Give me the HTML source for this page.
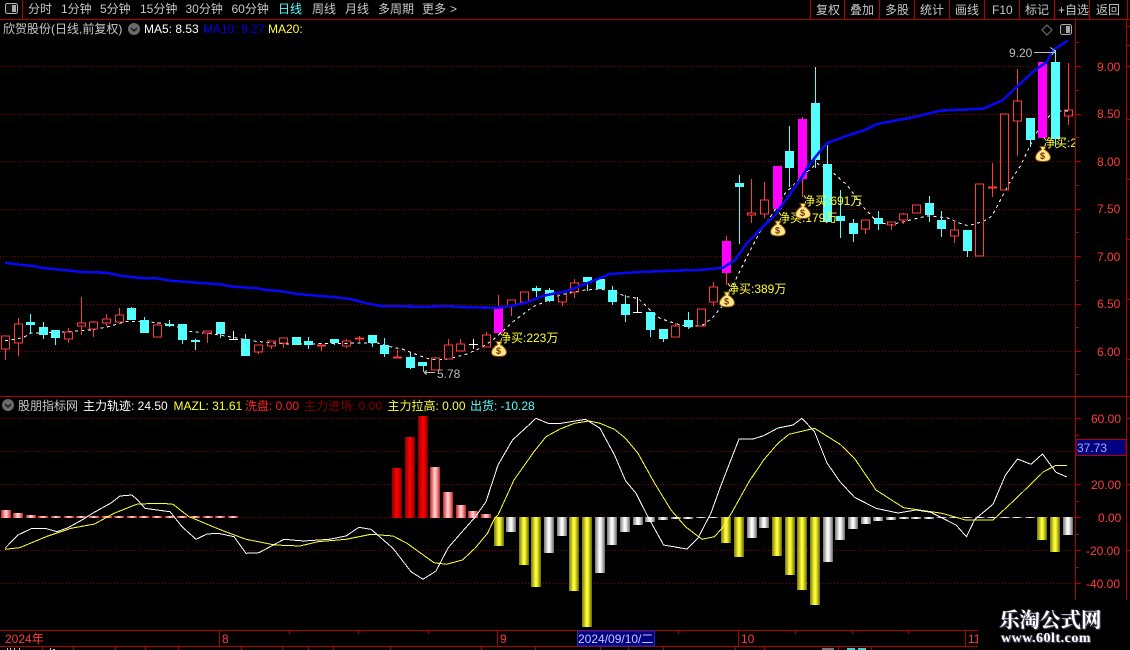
<!DOCTYPE html>
<html><head><meta charset="utf-8"><style>
html,body{margin:0;padding:0;background:#000;width:1130px;height:650px;overflow:hidden}
svg{position:absolute;left:0;top:0}
text{font-family:"Liberation Sans","Noto Sans CJK SC",sans-serif;font-size:12px;white-space:pre}
.t{fill:#c8c8c8}.p{fill:#ff3c3c}.y{fill:#ffff30}
.wm{position:absolute;color:#fff;white-space:nowrap;text-shadow:1px 1px 1px #557,-1px 0 1px #334}
</style></head><body>
<svg width="1130" height="650" viewBox="0 0 1130 650" xmlns="http://www.w3.org/2000/svg">
<defs>
<linearGradient id="gy"><stop offset="0" stop-color="#777700"/><stop offset=".45" stop-color="#ffff40"/><stop offset=".6" stop-color="#f4f430"/><stop offset="1" stop-color="#666600"/></linearGradient>
<linearGradient id="gw"><stop offset="0" stop-color="#777"/><stop offset=".45" stop-color="#fff"/><stop offset=".6" stop-color="#f0f0f0"/><stop offset="1" stop-color="#666"/></linearGradient>
<linearGradient id="gr"><stop offset="0" stop-color="#8a0000"/><stop offset=".45" stop-color="#ff0000"/><stop offset=".6" stop-color="#f00000"/><stop offset="1" stop-color="#7a0000"/></linearGradient>
<linearGradient id="gp"><stop offset="0" stop-color="#c82020"/><stop offset=".45" stop-color="#ffd0d0"/><stop offset=".6" stop-color="#ffb8b8"/><stop offset="1" stop-color="#c02020"/></linearGradient>
<clipPath id="cp"><rect x="0" y="20" width="1075" height="376"/></clipPath>
</defs>
<rect width="1130" height="650" fill="#000"/>

<!-- frame lines -->
<g stroke="#b00000" stroke-width="1" shape-rendering="crispEdges" fill="none">
<path d="M0 19.5H1130M22.5 0V19M810.5 0V19M844.5 0V19M879.5 0V19M914.5 0V19M949.5 0V19M984.5 0V19M1019.5 0V19M1054.5 0V19M1089.5 0V19M1127.5 0V19"/>
<path d="M0 396.5H1130M1075.5 20V600M1126.5 20V600"/>
<path d="M1075 66.5h6M1075 114.5h6M1075 161.5h6M1075 209.5h6M1075 256.5h6M1075 304.5h6M1075 351.5h6M1075 90.5h4M1075 137.5h4M1075 185.5h4M1075 232.5h4M1075 280.5h4M1075 327.5h4M1075 374.5h4M1075 42.5h4"/>
<path d="M1126 26.5h4M1126 45.5h4M1126 66.5h4M1126 119.5h4M1126 179.5h4M1126 239.5h4M1126 299.5h4M1126 359.5h4"/>
<path d="M1075 418.5h6M1075 484.5h6M1075 517.5h6M1075 550.5h6M1075 583.5h6M1075 435.5h4M1075 501.5h4M1075 534.5h4M1075 567.5h4M1126 418.5h4M1126 484.5h4M1126 550.5h4"/>
<path d="M0 630.5H978M0 646.5H978M219.5 631V646M497.5 631V646M738.5 631V646M965.5 631V646"/>
<path d="M289.5 631v3M358.5 631v3M428.5 631v3M678.5 631v3M795.5 631v3M852.5 631v3M908.5 631v3M42.5 646v4M73.5 646v4M115.5 646v4M145.5 646v4M178.5 646v4M241.5 646v4M282.5 646v4M308.5 646v4M333.5 646v4M390.5 646v4M481.5 646v4M535.5 646v4M600.5 646v4M628.5 646v4M663.5 646v4M735.5 646v4M764.5 646v4M838.5 646v4M871.5 646v4"/>
</g>
<g stroke="#8c0000" stroke-dasharray="1 2" shape-rendering="crispEdges">
<path d="M0 66.5H1075M0 114.5H1075M0 161.5H1075M0 209.5H1075M0 256.5H1075M0 304.5H1075M0 351.5H1075M0 418.5H1075M0 451.5H1075M0 484.5H1075M0 517.5H1075M0 550.5H1075M0 583.5H1075"/>
</g>

<!-- top bar -->
<rect x="5.5" y="3.5" width="12" height="10" rx="2" fill="#111" stroke="#b4b4b4"/><rect x="12" y="5" width="4" height="7" fill="#a8a8a8"/>
<g class="t" text-anchor="start">
<text x="28" y="13">分时</text><text x="61" y="13">1分钟</text><text x="100" y="13">5分钟</text><text x="140" y="13">15分钟</text><text x="185.500" y="13">30分钟</text><text x="231.500" y="13">60分钟</text>
<text x="278" y="13" style="fill:#54ffff">日线</text>
<text x="312" y="13">周线</text><text x="345" y="13">月线</text><text x="378" y="13">多周期</text><text x="422" y="13">更多</text><text x="450" y="13">&gt;</text>
<text x="816" y="14">复权</text><text x="850" y="14">叠加</text><text x="885" y="14">多股</text><text x="920" y="14">统计</text><text x="955" y="14">画线</text><text x="992" y="14">F10</text><text x="1025" y="14">标记</text><text x="1058" y="14">+自选</text><text x="1096" y="14">返回</text>
<text x="3" y="33">欣贺股份(日线,前复权)</text>
</g>
<circle cx="134" cy="29" r="6" fill="#6a6a6a"/><path d="M131 28l3 3 3-3" stroke="#111" stroke-width="1.300" fill="none"/>
<text x="144" y="33" fill="#fff">MA5: 8.53</text>
<text x="203" y="33" fill="#0000e6">MA10: 9.27</text>
<text x="268" y="33" fill="#ffff30">MA20:</text>
<path d="M1047 25l5 5-5 5-5-5z" fill="none" stroke="#777"/>
<rect x="1060.500" y="24.500" width="11" height="10" rx="2" fill="#111" stroke="#aaa"/><rect x="1066" y="26" width="4" height="7" fill="#a8a8a8"/>

<!-- price axis -->
<g class="p">
<text x="1097" y="71">9.00</text><text x="1097" y="118">8.50</text><text x="1097" y="166">8.00</text><text x="1097" y="213">7.50</text><text x="1097" y="261">7.00</text><text x="1097" y="308">6.50</text><text x="1097" y="356">6.00</text>
<text x="1091" y="423">60.00</text><text x="1091" y="489">20.00</text><text x="1098" y="522">0.00</text><text x="1086" y="555">-20.00</text><text x="1086" y="588">-40.00</text>
</g>
<rect x="1076" y="439.500" width="50" height="16" fill="#000080" stroke="#b00000" shape-rendering="crispEdges"/>
<text x="1077" y="452" fill="#a8a8ff">37.73</text>

<!-- candles -->
<g clip-path="url(#cp)" shape-rendering="crispEdges">
<polyline fill="none" stroke="#fff" stroke-width="1" stroke-dasharray="3 3.500" points="5,340.700 17,339 25,336.700 30,333 50,332.700 83,330.700 97,329 108,326.700 127,321.300 147,321.700 163,323.300 177,326.700 187,331 213,334 233,337.300 253,341 277,343.300 297,344.300 330,343.300 347,343.300 377,342.700 387,346 403,349.300 413,353.300 430,359.300 447,359.300 467,354 480,348.300 493,340 513,321.700 533,306.700 540,304 560,295 583,290.300 600,289 613,291.700 627,296.700 638,298.300 650,310 660,318.300 677,324 690,327 703,325 713,317.300 727,300 737,276.700 747,256.700 760,231.700 773,213 785,193.300 800,178.300 817,163.300 830,170 847,185 863,206.700 877,221.700 890,225 910,220 927,216 947,217.700 960,223.300 968,225.700 983,221.700 992,216 1003,195 1010,181.700 1020,166.700 1028,150 1037,132 1050,115 1058,111 1068,111"/>
<path fill="none" stroke="#ff3c3c" d="M1.500 336h8v13h-8zM5.500 349V360M14.500 324h8v19h-8zM18.500 318v6M18.500 343v13M64.500 332h8v7h-8zM68.500 328v4M68.500 339v4M77.500 323h8v3h-8zM81.500 297v26M81.500 326v9M89.500 322h8v7h-8zM93.500 321v1M93.500 329v8M102.500 319h8v4h-8zM106.500 314v5M106.500 323v3M115.500 315h8v7h-8zM119.500 308v7M153.500 325h8v12h-8zM157.500 322v3M203.500 331h8v2h-8zM207.500 333v10M254.500 345h8v7h-8zM258.500 352v2M267.500 341h8v5h-8zM271.500 346v3M279.500 338h8v5h-8zM283.500 343v5M317.500 345h8v1h-8zM321.500 346v5M342.500 341h8v5h-8zM346.500 339v2M346.500 346v2M355.500 338h8v1h-8zM359.500 336v2M359.500 339v3M393.500 357h8v1h-8zM397.500 350v7M431.500 358h8v12h-8zM435.500 357v1M444.500 345h8v14h-8zM448.500 339v6M456.500 344h8v7h-8zM460.500 339v5M482.500 335h8v12h-8zM486.500 332v3M507.500 300h8v6h-8zM511.500 306v10M520.500 292h8v10h-8zM558.500 292h8v10h-8zM562.500 302v4M570.500 283h8v9h-8zM574.500 279v4M574.500 292v6M671.500 326h8v11h-8zM675.500 323v3M697.500 309h8v17h-8zM709.500 287h8v15h-8zM713.500 282v5M713.500 302v4M747.500 213h8v2h-8zM751.500 179v34M751.500 215v8M760.500 200h8v14h-8zM764.500 182v18M764.500 214v4M861.500 220h8v9h-8zM865.500 229v5M887.500 222h8v3h-8zM891.500 225v5M899.500 214h8v6h-8zM903.500 213v1M903.500 220v4M912.500 205h8v8h-8zM950.500 230h8v6h-8zM954.500 220v10M954.500 236v7M975.500 184h8v72h-8zM988.500 187h8v1h-8zM992.500 163v24M992.500 188v9M1000.500 114h8v76h-8zM1013.500 101h8v20h-8zM1017.500 69v32M1017.500 121v35M1064.500 110h8v6h-8zM1068.500 63v47M1068.500 116v9M498.500 295v13M726.500 236v5M726.500 273v12M802.500 117v2M802.500 179v18"/>
<path fill="none" stroke="#54ffff" d="M30.500 314v20M43.500 322v17M55.500 330v15M131.500 307v2M144.500 317v4M169.500 320v7M182.500 324v20M195.500 339v11M220.500 322v16M245.500 334v5M308.500 337v12M334.500 339v6M372.500 335v12M384.500 338v19M410.500 353v16M536.500 286v11M549.500 288v14M587.500 277v14M612.500 286v19M625.500 295v27M650.500 312v25M663.500 329v13M688.500 312v17M739.500 175v69M789.500 126v61M815.500 67v101M827.500 145v20M840.500 190v48M853.500 219v23M878.500 211v19M929.500 196v26M941.500 211v26M967.500 230v27M1030.500 118v29M1055.500 50v97"/>
<path fill="#54ffff" d="M26 322h9v3h-9zM39 327h9v8h-9zM51 330h9v8h-9zM127 308h9v12h-9zM140 320h9v13h-9zM165 324h9v2h-9zM178 324h9v16h-9zM191 340h9v2h-9zM216 322h9v12h-9zM241 339h9v17h-9zM292 337h9v8h-9zM304 341h9v4h-9zM330 339h9v4h-9zM368 335h9v8h-9zM380 345h9v9h-9zM406 357h9v11h-9zM418 362h9v4h-9zM532 288h9v3h-9zM545 290h9v11h-9zM583 277h9v5h-9zM596 279h9v10h-9zM608 290h9v12h-9zM621 304h9v11h-9zM646 312h9v18h-9zM659 329h9v10h-9zM684 320h9v7h-9zM735 183h9v4h-9zM785 151h9v17h-9zM811 103h9v57h-9zM823 164h9v58h-9zM836 216h9v5h-9zM849 223h9v11h-9zM874 218h9v6h-9zM925 203h9v12h-9zM937 220h9v9h-9zM963 230h9v21h-9zM1026 118h9v22h-9zM1051 62h9v77h-9z"/>
<path fill="none" stroke="#fff" d="M229 339.500h9M233.500 331v9M469 344.500h9M473.500 339v10M633 312.500h9M637.500 297v16"/>
<path fill="#ff00ff" d="M494 308h9v25h-9zM722 241h9v32h-9zM773 166h9v43h-9zM798 119h9v60h-9zM1038 62h9v76h-9z"/>
<polyline fill="none" stroke="#0808f0" stroke-width="2.600" points="5,262.700 20,264.700 33,266 43,268 63,270 83,272 107,272.700 120,275.700 140,278 157,278.300 170,280.700 197,282.700 220,284.300 233,286.700 257,288.300 267,290 280,291 297,294 333,297 350,299 367,303.300 380,306 423,306.700 447,306.300 473,307.300 497,307.700 513,305.700 528,302 540,297 547,295 567,291 587,283.300 610,274 640,272 673,270.700 700,270 723,267.700 735,260 747,243 763,226.700 775,215 787,198.300 800,180 808,166.700 817,155 827,143 847,135.700 865,130 877,124 913,117.300 940,110.700 983,108.700 1003,100 1017,86.700 1033,71.700 1047,61.700 1053,50 1068,40.700"/>
<g class="t" style="fill:#bdbdbd"><text x="437" y="378">5.78</text><text x="1009" y="57">9.20</text></g>
<path fill="none" stroke="#bdbdbd" d="M423.500 366v6M424 372.500h11M424 372.500l3-2M424 372.500l3 2M1034 52.500h21M1055 50l-3 5M1050 47.500l5 3"/>
<g class="y">
<text x="499" y="342">净买:223万</text><text x="727" y="293">净买:389万</text><text x="803" y="205">净买:691万</text><text x="778" y="222">净买:179万</text><text x="1043" y="147">净买:2</text>
</g>
</g>

<!-- money bags -->
<g id="bags">
<g transform="translate(491.500,341)"><path d="M4.500 0.500h6l-1.500 3C12 5 15 8.500 15 11.500 15 14.500 12 15.500 7.500 15.500S0 14.500 0 11.500C0 8.500 3 5 6 3.500z" fill="#ffe884" stroke="#7a4c10"/><text x="4.500" y="13" style="font-size:9px;font-weight:bold" fill="#7a2c10">$</text></g>
<g transform="translate(719.500,291.500)"><path d="M4.500 0.500h6l-1.500 3C12 5 15 8.500 15 11.500 15 14.500 12 15.500 7.500 15.500S0 14.500 0 11.500C0 8.500 3 5 6 3.500z" fill="#ffe884" stroke="#7a4c10"/><text x="4.500" y="13" style="font-size:9px;font-weight:bold" fill="#7a2c10">$</text></g>
<g transform="translate(770.500,220.500)"><path d="M4.500 0.500h6l-1.500 3C12 5 15 8.500 15 11.500 15 14.500 12 15.500 7.500 15.500S0 14.500 0 11.500C0 8.500 3 5 6 3.500z" fill="#ffe884" stroke="#7a4c10"/><text x="4.500" y="13" style="font-size:9px;font-weight:bold" fill="#7a2c10">$</text></g>
<g transform="translate(795.500,203)"><path d="M4.500 0.500h6l-1.500 3C12 5 15 8.500 15 11.500 15 14.500 12 15.500 7.500 15.500S0 14.500 0 11.500C0 8.500 3 5 6 3.500z" fill="#ffe884" stroke="#7a4c10"/><text x="4.500" y="13" style="font-size:9px;font-weight:bold" fill="#7a2c10">$</text></g>
<g transform="translate(1035.500,146)"><path d="M4.500 0.500h6l-1.500 3C12 5 15 8.500 15 11.500 15 14.500 12 15.500 7.500 15.500S0 14.500 0 11.500C0 8.500 3 5 6 3.500z" fill="#ffe884" stroke="#7a4c10"/><text x="4.500" y="13" style="font-size:9px;font-weight:bold" fill="#7a2c10">$</text></g>
</g>

<!-- indicator header -->
<circle cx="8" cy="405" r="6" fill="#6a6a6a"/><path d="M5 404l3 3 3-3" stroke="#111" stroke-width="1.300" fill="none"/>
<text x="18" y="410" class="t">股朋指标网</text>
<text x="83" y="410" fill="#fff">主力轨迹: 24.50</text>
<text x="173.500" y="410" fill="#ffff30">MAZL: 31.61</text>
<text x="245" y="410" fill="#ff2020">洗盘: 0.00</text>
<text x="304" y="410" fill="#800000">主力进场: 0.00</text>
<text x="387.500" y="410" fill="#ffff30">主力拉高: 0.00</text>
<text x="470" y="410" fill="#54ffff">出货: -10.28</text>

<!-- bars -->
<g shape-rendering="crispEdges">
<g fill="url(#gp)">
<rect x="1" y="510" width="10" height="8"/><rect x="13" y="513" width="10" height="5"/><rect x="26" y="515" width="10" height="3"/><rect x="38" y="516" width="10" height="2"/>
<rect x="51" y="516" width="10" height="2"/><rect x="64" y="516" width="10" height="2"/><rect x="76" y="516" width="10" height="2"/><rect x="89" y="516" width="10" height="2"/><rect x="102" y="516" width="10" height="2"/><rect x="114" y="516" width="10" height="2"/><rect x="127" y="516" width="10" height="2"/><rect x="139" y="516" width="10" height="2"/><rect x="152" y="516" width="10" height="2"/><rect x="165" y="516" width="10" height="2"/><rect x="177" y="516" width="10" height="2"/><rect x="190" y="516" width="10" height="2"/><rect x="203" y="516" width="10" height="2"/><rect x="215" y="516" width="10" height="2"/><rect x="228" y="516" width="10" height="2"/>
<rect x="430" y="467" width="10" height="51"/><rect x="443" y="492" width="10" height="26"/><rect x="456" y="505" width="10" height="13"/><rect x="468" y="511" width="10" height="7"/><rect x="481" y="514" width="10" height="4"/>
</g>
<g fill="url(#gr)"><rect x="392" y="468" width="10" height="50"/><rect x="405" y="437" width="10" height="81"/><rect x="418" y="416" width="10" height="102"/></g>
<g fill="url(#gy)">
<rect x="494" y="517" width="10" height="29"/><rect x="519" y="517" width="10" height="48"/><rect x="531" y="517" width="10" height="70"/><rect x="569" y="517" width="10" height="74"/><rect x="582" y="517" width="10" height="110"/>
<rect x="721" y="517" width="10" height="26"/><rect x="734" y="517" width="10" height="40"/><rect x="772" y="517" width="10" height="39"/><rect x="785" y="517" width="10" height="58"/><rect x="797" y="517" width="10" height="73"/><rect x="810" y="517" width="10" height="88"/>
<rect x="1037" y="517" width="10" height="23"/><rect x="1050" y="517" width="10" height="35"/>
</g>
<g fill="url(#gw)">
<rect x="506" y="517" width="10" height="15"/><rect x="544" y="517" width="10" height="36"/><rect x="557" y="517" width="10" height="19"/><rect x="595" y="517" width="10" height="56"/><rect x="607" y="517" width="10" height="28"/><rect x="620" y="517" width="10" height="15"/><rect x="633" y="517" width="10" height="8"/><rect x="645" y="517" width="10" height="5"/><rect x="658" y="517" width="10" height="3"/><rect x="671" y="517" width="10" height="2"/><rect x="683" y="517" width="10" height="2"/><rect x="696" y="517" width="10" height="1"/><rect x="708" y="517" width="10" height="1"/>
<rect x="747" y="517" width="10" height="21"/><rect x="759" y="517" width="10" height="11"/><rect x="823" y="517" width="10" height="45"/><rect x="835" y="517" width="10" height="23"/><rect x="848" y="517" width="10" height="12"/><rect x="861" y="517" width="10" height="7"/><rect x="873" y="517" width="10" height="4"/><rect x="886" y="517" width="10" height="3"/><rect x="899" y="517" width="10" height="2"/><rect x="911" y="517" width="10" height="2"/><rect x="924" y="517" width="10" height="2"/><rect x="937" y="517" width="10" height="1"/><rect x="949" y="517" width="10" height="1"/><rect x="962" y="517" width="10" height="1"/><rect x="975" y="517" width="10" height="1"/><rect x="987" y="517" width="10" height="1"/><rect x="1000" y="517" width="10" height="1"/><rect x="1012" y="517" width="10" height="1"/><rect x="1025" y="517" width="10" height="1"/>
<rect x="1063" y="517" width="10" height="18"/>
</g>

<!-- indicator lines -->
<polyline fill="none" stroke="#ffff30" points="5,549.300 19.600,547.700 46,536.700 71,528.300 94.600,524 114,513.300 137.500,504 162.500,503.300 173,504.300 189,516.700 193,518.300 221,530 246,539.300 275,545 300,546 318,541.700 346,539.300 371,534.300 393,536 407,543.300 434,562.700 446.400,564.300 462.500,560 475,548.300 487.500,533.300 494.600,518.300 498,515 514,480 534,451.700 546,436.700 560,429 574.500,423.300 589,421 600,423.300 614.500,429.300 625.500,438.300 638,453.300 654.500,483 671,510 685.500,526.700 702,539.300 714.500,536.700 722,528.300 731,514 749,481.700 763.600,460 778,443.300 789,434.300 814.500,428.300 840,444.300 854.500,458.300 876,490 903.600,507.700 942,513.300 965.500,520 993,520 1014.500,500 1043.600,471.700 1056,465.300 1067,465.300"/>
<polyline fill="none" stroke="#fff" points="5,548.300 18,535 32,528.300 45,528.300 57,531.700 68,527.700 82,520 93,513 111,503 120,496 132,495 137.500,500 145,508.300 157,510 170,511.700 182,526.700 196,539.300 207,534 218,533.300 234,536.700 246,553.300 259,552.700 284,539.300 304,541 329,539.300 346,536 359,527.300 371,529.300 393,548.300 411,571.700 423,579.300 436,571 448,548 461,533 475,517.300 486,501.700 498,465 512.500,440 527,426.700 536,418.300 548,423.300 560,423.500 571,421.700 585.500,419.300 600,428.300 614.500,455 625.500,480.700 636,493.300 647,515 663.600,545 687,549 698,538 711,513 720,488 739,439 753,439 763.600,435.700 778,428 793,425 802,418.300 814.500,431.700 827,463 840,481.700 854.500,497.300 876,508.300 898,513 916,510 931,512.300 956,525 966.500,536.700 974.500,520 978,516.700 993,504.300 1005.500,475 1017.500,459 1031,464.300 1042.500,454 1056,472.300 1067,477"/>
</g>

<!-- time axis -->
<g class="p">
<text x="5" y="643">2024年</text><text x="222" y="643">8</text><text x="500" y="643">9</text><text x="741" y="643">10</text><text x="968" y="643">11</text>
</g>
<rect x="577.500" y="631" width="77" height="15" fill="#000080" stroke="#2a2ab0" shape-rendering="crispEdges"/>
<text x="578" y="643" fill="#c8c8ff">2024/09/10/二</text>

<!-- bottom row fragments -->
<g fill="#c8c8c8" shape-rendering="crispEdges">
<path d="M7 648h1v2h-1zM10 648h1v2h-1zM14 648h1v2h-1zM19 648h1v2h-1zM50 648h1v2h-1zM53 649h2v1h-2z"/>
<path d="M822 648h12v2h-12z" opacity=".6"/>
</g>
<path d="M847 648h8v2h-8zM858 648h8v2h-8z" fill="#54ffff" opacity=".8"/>

<!-- watermark backdrop -->
<rect x="978" y="600" width="152" height="50" fill="#000"/>
<rect x="1075" y="599" width="1" height="1" fill="#b00000"/>
</svg>
<div class="wm" style="left:999px;top:606px;font:bold 20.500px 'Noto Serif CJK SC','Liberation Serif',serif;line-height:24px">乐淘公式网</div>
<div class="wm" style="left:1001px;top:631px;font:bold 14px 'Liberation Serif',serif;line-height:16px;letter-spacing:.5px">www.60lt.com</div>
</body></html>
